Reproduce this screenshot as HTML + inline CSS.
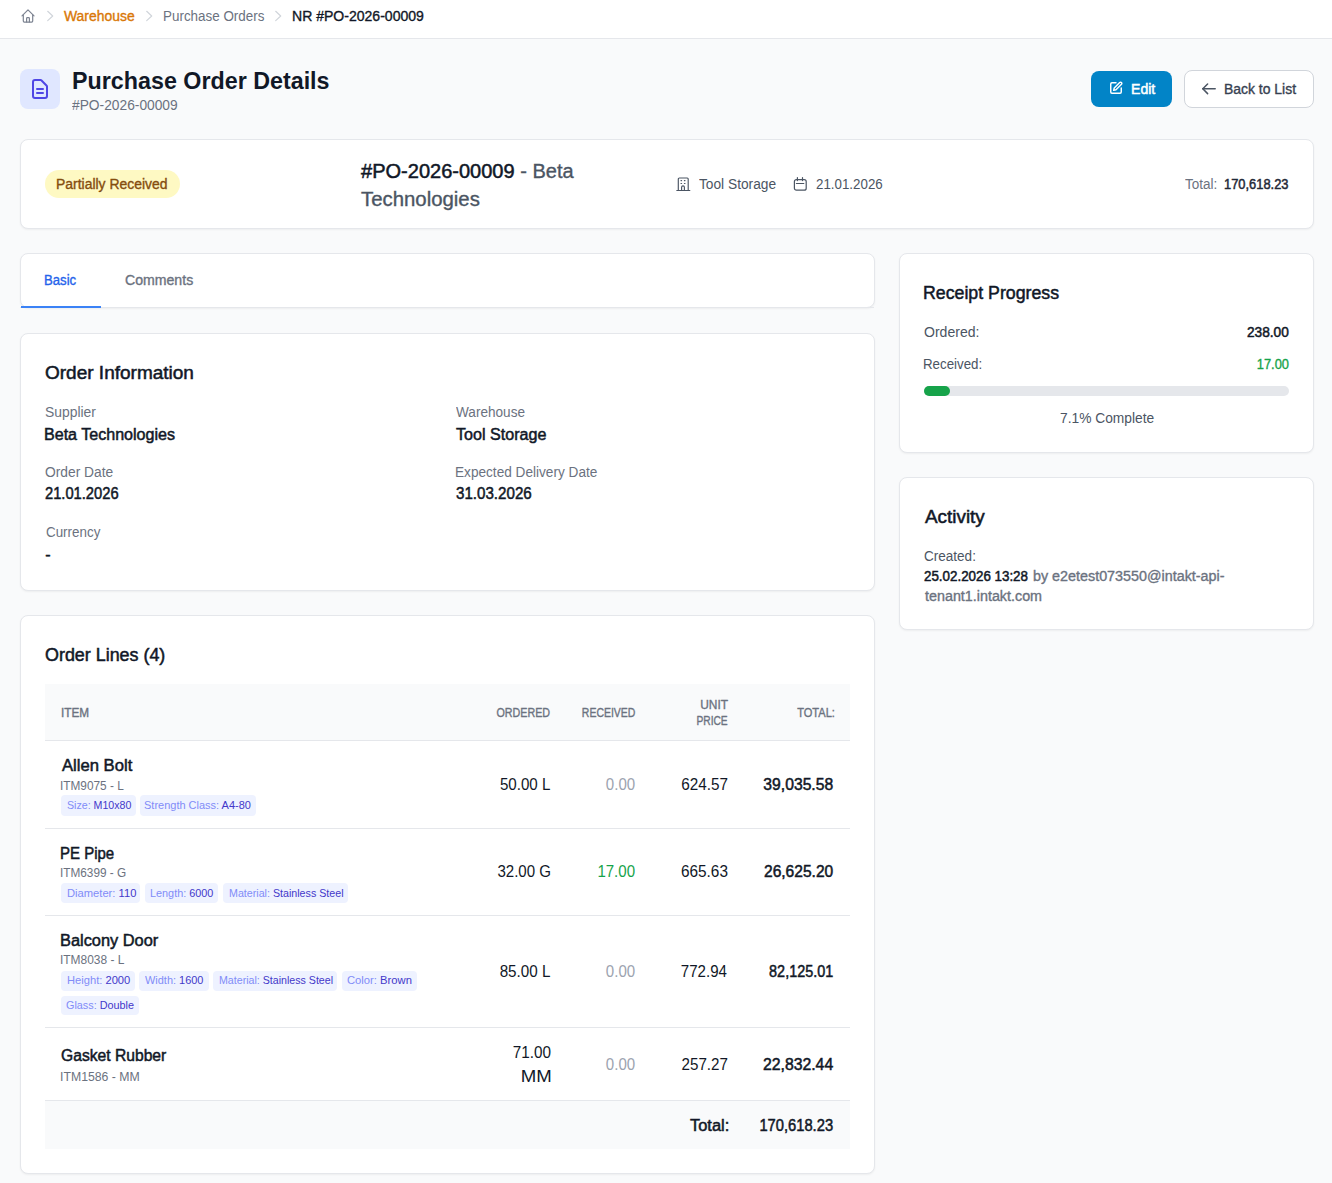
<!DOCTYPE html>
<html><head><meta charset="utf-8"><title>Purchase Order Details</title>
<style>
html,body{margin:0;padding:0;}
body{width:1332px;height:1183px;overflow:hidden;position:relative;background:#f9fafb;font-family:"Liberation Sans",sans-serif;}
.t{position:absolute;white-space:pre;}
.a{position:absolute;}
.card{position:absolute;background:#fff;border:1px solid #e5e7eb;border-radius:8px;box-sizing:border-box;box-shadow:0 1px 2px rgba(0,0,0,0.05);}
.chip{position:absolute;background:#eef2ff;border-radius:4px;}
.hl{position:absolute;height:1px;background:#e5e7eb;}
svg{display:block;}
</style></head><body>
<div class="a" style="left:0;top:0;width:1332px;height:38px;background:#fff;border-bottom:1px solid #e5e7eb;"></div>
<div class="a" style="left:20px;top:8px"><svg width="16" height="16" viewBox="0 0 16 16" fill="none" stroke="#7c8391" stroke-width="1.2" stroke-linecap="round" stroke-linejoin="round"><path d="M2 7.9 L8 1.9 L14 7.9"/><path d="M3.3 6.8 V13.1 a1 1 0 0 0 1 1 H11.7 a1 1 0 0 0 1-1 V6.8"/><path d="M6.6 14 V10.5 a0.8 0.8 0 0 1 .8-.8 h1.2 a.8.8 0 0 1 .8.8 V14"/></svg></div>
<div class="a" style="left:46px;top:10px"><svg width="8" height="12" viewBox="0 0 8 12" fill="none" stroke="#d1d5db" stroke-width="1.2" stroke-linecap="round" stroke-linejoin="round"><path d="M1.7 1.3 L6.7 6 L1.7 10.6"/></svg></div>
<div class="a" style="left:145px;top:10px"><svg width="8" height="12" viewBox="0 0 8 12" fill="none" stroke="#d1d5db" stroke-width="1.2" stroke-linecap="round" stroke-linejoin="round"><path d="M1.7 1.3 L6.7 6 L1.7 10.6"/></svg></div>
<div class="a" style="left:274px;top:10px"><svg width="8" height="12" viewBox="0 0 8 12" fill="none" stroke="#d1d5db" stroke-width="1.2" stroke-linecap="round" stroke-linejoin="round"><path d="M1.7 1.3 L6.7 6 L1.7 10.6"/></svg></div>

<div class="a" style="left:20px;top:69px;width:40px;height:40px;border-radius:8px;background:#e0e7ff"></div>
<div class="a" style="left:28px;top:77px"><svg width="24" height="24" viewBox="0 0 24 24" fill="none" stroke="#4f46e5" stroke-width="2" stroke-linecap="round" stroke-linejoin="round"><path d="M9 12h6m-6 4h6M17 21H7a2 2 0 0 1-2-2V5a2 2 0 0 1 2-2h5.586a1 1 0 0 1 .707.293l5.414 5.414a1 1 0 0 1 .293.707V19a2 2 0 0 1-2 2z"/></svg></div>

<div class="a" style="left:1091px;top:71px;width:81px;height:36px;border-radius:8px;background:#0284c7"></div>
<div class="a" style="left:1108.5px;top:81px"><svg width="14" height="14" viewBox="0 0 24 24" fill="none" stroke="#ffffff" stroke-width="2.5" stroke-linecap="round" stroke-linejoin="round"><path d="M12 3H5a2 2 0 0 0-2 2v14a2 2 0 0 0 2 2h14a2 2 0 0 0 2-2v-7"/><path d="M18.375 2.625a2.121 2.121 0 1 1 3 3L12 15l-4 1 1-4Z"/></svg></div>
<div class="a" style="left:1184px;top:70px;width:130px;height:38px;border-radius:8px;background:#fff;border:1px solid #d1d5db;box-sizing:border-box"></div>
<div class="a" style="left:1201px;top:83px"><svg width="16" height="14" viewBox="0 0 16 14" fill="none" stroke="#4b5563" stroke-width="1.5" stroke-linecap="round" stroke-linejoin="round"><path d="M1.8 5.8 H14.2"/><path d="M6.6 1 L1.8 5.8 L6.6 10.6"/></svg></div>

<div class="card" style="left:20px;top:139px;width:1294px;height:90px"></div>
<div class="a" style="left:45px;top:170px;width:135px;height:28px;border-radius:14px;background:#fef9c3"></div>
<div class="a" style="left:676px;top:177px"><svg width="16" height="16" viewBox="0 0 16 16" fill="none" stroke="#4b5563" stroke-width="1.15" stroke-linecap="round" stroke-linejoin="round"><path d="M0.8 13.5 H13.8"/><path d="M2.3 13.4 V2 a1 1 0 0 1 1-1 H11.2 a1 1 0 0 1 1 1 V13.4"/><path d="M5 3.6h.6M8.4 3.6h.6M5 6.5h.6M8.4 6.5h.6"/><path d="M5.6 13.2 V10.2 a1.4 1.4 0 0 1 2.8 0 V13.2"/></svg></div>
<div class="a" style="left:793px;top:177px"><svg width="16" height="16" viewBox="0 0 16 16" fill="none" stroke="#4b5563" stroke-width="1.2" stroke-linecap="round" stroke-linejoin="round"><rect x="1.4" y="2.6" width="11.8" height="10.6" rx="2"/><path d="M4.4 0.6 V3.6 M9.5 0.6 V3.6 M3.4 6.5 H10.8"/></svg></div>

<div class="card" style="left:20px;top:253px;width:855px;height:55px"></div>
<div class="a" style="left:20px;top:307px;width:854px;height:1px;background:#e5e7eb"></div>
<div class="a" style="left:21px;top:306px;width:80px;height:2px;background:#3b82f6"></div>

<div class="card" style="left:20px;top:333px;width:855px;height:258px"></div>
<div class="card" style="left:20px;top:615px;width:855px;height:559px"></div>
<div class="a" style="left:45px;top:684px;width:805px;height:56px;background:#f9fafb"></div>
<div class="hl" style="left:45px;top:740px;width:805px"></div>
<div class="hl" style="left:45px;top:828px;width:805px"></div>
<div class="hl" style="left:45px;top:915px;width:805px"></div>
<div class="hl" style="left:45px;top:1027px;width:805px"></div>
<div class="hl" style="left:45px;top:1100px;width:805px"></div>
<div class="a" style="left:45px;top:1101px;width:805px;height:48px;background:#f9fafb"></div>

<div class="card" style="left:899px;top:253px;width:415px;height:200px"></div>
<div class="a" style="left:924px;top:386px;width:365px;height:10px;border-radius:5px;background:#e5e7eb"></div>
<div class="a" style="left:924px;top:386px;width:26px;height:10px;border-radius:5px;background:#16a34a"></div>
<div class="card" style="left:899px;top:477px;width:415px;height:153px"></div>

<div class="chip" style="left:61px;top:795px;width:75px;height:21px"></div>
<div class="t" id="chip_795_0" style="left:66.71px;top:798.09px;font-size:11px;line-height:14px;letter-spacing:0.000px;transform:scaleX(0.9666);transform-origin:0 50%"><span style="color:#818cf8">Size: </span><span style="color:#4338ca">M10x80</span></div>
<div class="chip" style="left:140px;top:795px;width:116px;height:21px"></div>
<div class="t" id="chip_795_1" style="left:144.47px;top:798.09px;font-size:11px;line-height:14px;letter-spacing:0.000px;transform:scaleX(0.9994);transform-origin:0 50%"><span style="color:#818cf8">Strength Class: </span><span style="color:#4338ca">A4-80</span></div>
<div class="chip" style="left:61px;top:883px;width:79px;height:20px"></div>
<div class="t" id="chip_883_0" style="left:66.57px;top:885.79px;font-size:11px;line-height:14px;letter-spacing:0.000px;transform:scaleX(1.0162);transform-origin:0 50%"><span style="color:#818cf8">Diameter: </span><span style="color:#4338ca">110</span></div>
<div class="chip" style="left:145px;top:883px;width:73px;height:20px"></div>
<div class="t" id="chip_883_1" style="left:150.42px;top:885.79px;font-size:11px;line-height:14px;letter-spacing:0.000px;transform:scaleX(0.9868);transform-origin:0 50%"><span style="color:#818cf8">Length: </span><span style="color:#4338ca">6000</span></div>
<div class="chip" style="left:223px;top:883px;width:125px;height:20px"></div>
<div class="t" id="chip_883_2" style="left:228.83px;top:885.79px;font-size:11px;line-height:14px;letter-spacing:0.000px;transform:scaleX(0.9703);transform-origin:0 50%"><span style="color:#818cf8">Material: </span><span style="color:#4338ca">Stainless Steel</span></div>
<div class="chip" style="left:61px;top:971px;width:74px;height:20px"></div>
<div class="t" id="chip_970_0" style="left:66.51px;top:973.29px;font-size:11px;line-height:14px;letter-spacing:0.000px;transform:scaleX(1.0143);transform-origin:0 50%"><span style="color:#818cf8">Height: </span><span style="color:#4338ca">2000</span></div>
<div class="chip" style="left:139px;top:971px;width:70px;height:20px"></div>
<div class="t" id="chip_970_1" style="left:145.27px;top:973.29px;font-size:11px;line-height:14px;letter-spacing:0.000px;transform:scaleX(0.9946);transform-origin:0 50%"><span style="color:#818cf8">Width: </span><span style="color:#4338ca">1600</span></div>
<div class="chip" style="left:213px;top:971px;width:124px;height:20px"></div>
<div class="t" id="chip_970_2" style="left:218.84px;top:973.29px;font-size:11px;line-height:14px;letter-spacing:0.000px;transform:scaleX(0.9664);transform-origin:0 50%"><span style="color:#818cf8">Material: </span><span style="color:#4338ca">Stainless Steel</span></div>
<div class="chip" style="left:342px;top:971px;width:75px;height:20px"></div>
<div class="t" id="chip_970_3" style="left:347.38px;top:973.29px;font-size:11px;line-height:14px;letter-spacing:0.000px;transform:scaleX(1.0205);transform-origin:0 50%"><span style="color:#818cf8">Color: </span><span style="color:#4338ca">Brown</span></div>
<div class="chip" style="left:61px;top:996px;width:78px;height:19px"></div>
<div class="t" id="chip_995_0" style="left:66.11px;top:998.19px;font-size:11px;line-height:14px;letter-spacing:0.000px;transform:scaleX(0.9830);transform-origin:0 50%"><span style="color:#818cf8">Glass: </span><span style="color:#4338ca">Double</span></div>
<div class="t" id="bc1" style="top:7.15px;font-size:14px;line-height:18px;letter-spacing:0.000px;left:64.27px;transform:scaleX(0.9935);transform-origin:0 50%;"><span style="color:#d97706;-webkit-text-stroke:0.35px #d97706">Warehouse</span></div>
<div class="t" id="bc2" style="top:7.15px;font-size:14px;line-height:18px;letter-spacing:0.000px;left:162.79px;transform:scaleX(0.9582);transform-origin:0 50%;"><span style="color:#6b7280">Purchase Orders</span></div>
<div class="t" id="bc3" style="top:7.15px;font-size:14px;line-height:18px;letter-spacing:0.000px;left:291.66px;transform:scaleX(1.0026);transform-origin:0 50%;"><span style="color:#111827;-webkit-text-stroke:0.35px #111827">NR #PO-2026-00009</span></div>
<div class="t" id="h1" style="top:65.68px;font-size:24px;line-height:30px;letter-spacing:0.000px;left:71.65px;transform:scaleX(0.9702);transform-origin:0 50%;"><span style="color:#111827;font-weight:700">Purchase Order Details</span></div>
<div class="t" id="h2" style="top:95.75px;font-size:14px;line-height:18px;letter-spacing:0.000px;left:72.11px;transform:scaleX(0.9839);transform-origin:0 50%;"><span style="color:#6b7280">#PO-2026-00009</span></div>
<div class="t" id="btn1" style="top:80.15px;font-size:14px;line-height:18px;letter-spacing:0.000px;left:1130.85px;transform:scaleX(1.0056);transform-origin:0 50%;"><span style="color:#ffffff;-webkit-text-stroke:0.5px #ffffff">Edit</span></div>
<div class="t" id="btn2" style="top:80.15px;font-size:14px;line-height:18px;letter-spacing:0.000px;left:1224.40px;transform:scaleX(0.9956);transform-origin:0 50%;"><span style="color:#374151;-webkit-text-stroke:0.35px #374151">Back to List</span></div>
<div class="t" id="badge" style="top:175.35px;font-size:14px;line-height:18px;letter-spacing:0.000px;left:56.48px;transform:scaleX(0.9958);transform-origin:0 50%;"><span style="color:#854d0e;-webkit-text-stroke:0.35px #854d0e">Partially Received</span></div>
<div class="t" id="po1" style="top:159.37px;font-size:20px;line-height:25px;letter-spacing:0.000px;left:360.60px;transform:scaleX(1.0013);transform-origin:0 50%;"><span style="color:#111827;-webkit-text-stroke:0.5px #111827">#PO-2026-00009</span><span style="color:#4b5563;-webkit-text-stroke:0.35px #4b5563"> - Beta</span></div>
<div class="t" id="po2" style="top:186.97px;font-size:20px;line-height:25px;letter-spacing:0.000px;left:360.52px;transform:scaleX(1.0182);transform-origin:0 50%;"><span style="color:#4b5563;-webkit-text-stroke:0.35px #4b5563">Technologies</span></div>
<div class="t" id="loc" style="top:175.25px;font-size:14px;line-height:18px;letter-spacing:0.000px;left:699.01px;transform:scaleX(0.9801);transform-origin:0 50%;"><span style="color:#4b5563">Tool Storage</span></div>
<div class="t" id="date" style="top:175.15px;font-size:14px;line-height:18px;letter-spacing:0.000px;left:816.02px;transform:scaleX(0.9526);transform-origin:0 50%;"><span style="color:#4b5563">21.01.2026</span></div>
<div class="t" id="tot1" style="top:174.95px;font-size:14px;line-height:18px;letter-spacing:0.000px;left:1184.91px;transform:scaleX(0.9652);transform-origin:0 50%;"><span style="color:#6b7280">Total:</span></div>
<div class="t" id="tot2" style="top:174.95px;font-size:14px;line-height:18px;letter-spacing:0.000px;left:1224.11px;transform:scaleX(0.9199);transform-origin:0 50%;"><span style="color:#1f2937;-webkit-text-stroke:0.5px #1f2937">170,618.23</span></div>
<div class="t" id="tab1" style="top:271.35px;font-size:14px;line-height:18px;letter-spacing:0.000px;left:44.30px;transform:scaleX(0.9393);transform-origin:0 50%;"><span style="color:#2563eb;-webkit-text-stroke:0.35px #2563eb">Basic</span></div>
<div class="t" id="tab2" style="top:271.35px;font-size:14px;line-height:18px;letter-spacing:0.000px;left:125.30px;transform:scaleX(1.0074);transform-origin:0 50%;"><span style="color:#6b7280;-webkit-text-stroke:0.35px #6b7280">Comments</span></div>
<div class="t" id="oi" style="top:361.56px;font-size:18px;line-height:22px;letter-spacing:0.000px;left:45.16px;transform:scaleX(1.0557);transform-origin:0 50%;"><span style="color:#111827;-webkit-text-stroke:0.5px #111827">Order Information</span></div>
<div class="t" id="l1" style="top:403.05px;font-size:14px;line-height:18px;letter-spacing:0.000px;left:44.61px;transform:scaleX(0.9924);transform-origin:0 50%;"><span style="color:#6b7280">Supplier</span></div>
<div class="t" id="v1" style="top:425.36px;font-size:16px;line-height:20px;letter-spacing:0.000px;left:44.45px;transform:scaleX(1.0044);transform-origin:0 50%;"><span style="color:#111827;-webkit-text-stroke:0.5px #111827">Beta Technologies</span></div>
<div class="t" id="l2" style="top:463.15px;font-size:14px;line-height:18px;letter-spacing:0.000px;left:44.98px;transform:scaleX(0.9853);transform-origin:0 50%;"><span style="color:#6b7280">Order Date</span></div>
<div class="t" id="v2" style="top:483.66px;font-size:16px;line-height:20px;letter-spacing:0.000px;left:45.06px;transform:scaleX(0.9187);transform-origin:0 50%;"><span style="color:#111827;-webkit-text-stroke:0.5px #111827">21.01.2026</span></div>
<div class="t" id="l3" style="top:522.95px;font-size:14px;line-height:18px;letter-spacing:0.000px;left:45.53px;transform:scaleX(0.9565);transform-origin:0 50%;"><span style="color:#6b7280">Currency</span></div>
<div class="t" id="v3" style="top:545.46px;font-size:16px;line-height:20px;letter-spacing:0.000px;left:45.34px;"><span style="color:#111827;-webkit-text-stroke:0.5px #111827">-</span></div>
<div class="t" id="l4" style="top:403.05px;font-size:14px;line-height:18px;letter-spacing:0.000px;left:455.52px;transform:scaleX(0.9705);transform-origin:0 50%;"><span style="color:#6b7280">Warehouse</span></div>
<div class="t" id="v4" style="top:425.36px;font-size:16px;line-height:20px;letter-spacing:0.000px;left:455.50px;transform:scaleX(1.0061);transform-origin:0 50%;"><span style="color:#111827;-webkit-text-stroke:0.5px #111827">Tool Storage</span></div>
<div class="t" id="l5" style="top:463.15px;font-size:14px;line-height:18px;letter-spacing:0.000px;left:454.79px;transform:scaleX(0.9729);transform-origin:0 50%;"><span style="color:#6b7280">Expected Delivery Date</span></div>
<div class="t" id="v5" style="top:483.66px;font-size:16px;line-height:20px;letter-spacing:0.000px;left:455.70px;transform:scaleX(0.9457);transform-origin:0 50%;"><span style="color:#111827;-webkit-text-stroke:0.5px #111827">31.03.2026</span></div>
<div class="t" id="ol" style="top:643.66px;font-size:18px;line-height:22px;letter-spacing:0.000px;left:45.08px;transform:scaleX(0.9941);transform-origin:0 50%;"><span style="color:#111827;-webkit-text-stroke:0.5px #111827">Order Lines (4)</span></div>
<div class="t" id="th1" style="top:706.24px;font-size:12px;line-height:15px;letter-spacing:0.000px;left:60.51px;transform:scaleX(0.9810);transform-origin:0 50%;"><span style="color:#6b7280;-webkit-text-stroke:0.35px #6b7280">ITEM</span></div>
<div class="t" id="th2" style="top:706.24px;font-size:12px;line-height:15px;letter-spacing:0.000px;right:781.97px;transform:scaleX(0.8926);transform-origin:100% 50%;"><span style="color:#6b7280;-webkit-text-stroke:0.35px #6b7280">ORDERED</span></div>
<div class="t" id="th3" style="top:706.24px;font-size:12px;line-height:15px;letter-spacing:0.000px;right:696.21px;transform:scaleX(0.8723);transform-origin:100% 50%;"><span style="color:#6b7280;-webkit-text-stroke:0.35px #6b7280">RECEIVED</span></div>
<div class="t" id="th4a" style="top:698.44px;font-size:12px;line-height:15px;letter-spacing:0.000px;right:604.19px;transform:scaleX(0.9934);transform-origin:100% 50%;"><span style="color:#6b7280;-webkit-text-stroke:0.35px #6b7280">UNIT</span></div>
<div class="t" id="th4b" style="top:714.34px;font-size:12px;line-height:15px;letter-spacing:0.000px;right:604.57px;transform:scaleX(0.8517);transform-origin:100% 50%;"><span style="color:#6b7280;-webkit-text-stroke:0.35px #6b7280">PRICE</span></div>
<div class="t" id="th5" style="top:706.24px;font-size:12px;line-height:15px;letter-spacing:0.000px;right:497.60px;transform:scaleX(0.9220);transform-origin:100% 50%;"><span style="color:#6b7280;-webkit-text-stroke:0.35px #6b7280">TOTAL:</span></div>
<div class="t" id="r1n" style="top:756.46px;font-size:16px;line-height:20px;letter-spacing:0.000px;left:61.59px;transform:scaleX(1.0395);transform-origin:0 50%;"><span style="color:#111827;-webkit-text-stroke:0.5px #111827">Allen Bolt</span></div>
<div class="t" id="r1c" style="top:778.94px;font-size:12px;line-height:15px;letter-spacing:0.000px;left:60.48px;transform:scaleX(0.9851);transform-origin:0 50%;"><span style="color:#6b7280">ITM9075 - L</span></div>
<div class="t" id="r1o" style="top:775.46px;font-size:16px;line-height:20px;letter-spacing:0.000px;right:781.30px;transform:scaleX(0.9452);transform-origin:100% 50%;"><span style="color:#111827">50.00 L</span></div>
<div class="t" id="r1r" style="top:775.46px;font-size:16px;line-height:20px;letter-spacing:0.000px;right:696.94px;transform:scaleX(0.9401);transform-origin:100% 50%;"><span style="color:#9ca3af">0.00</span></div>
<div class="t" id="r1u" style="top:775.46px;font-size:16px;line-height:20px;letter-spacing:0.000px;right:604.02px;transform:scaleX(0.9551);transform-origin:100% 50%;"><span style="color:#111827">624.57</span></div>
<div class="t" id="r1t" style="top:775.46px;font-size:16px;line-height:20px;letter-spacing:0.000px;right:498.78px;transform:scaleX(0.9807);transform-origin:100% 50%;"><span style="color:#111827;-webkit-text-stroke:0.5px #111827">39,035.58</span></div>
<div class="t" id="r2n" style="top:844.06px;font-size:16px;line-height:20px;letter-spacing:0.000px;left:60.48px;transform:scaleX(0.9361);transform-origin:0 50%;"><span style="color:#111827;-webkit-text-stroke:0.5px #111827">PE Pipe</span></div>
<div class="t" id="r2c" style="top:865.74px;font-size:12px;line-height:15px;letter-spacing:0.000px;left:60.30px;transform:scaleX(0.9828);transform-origin:0 50%;"><span style="color:#6b7280">ITM6399 - G</span></div>
<div class="t" id="r2o" style="top:861.56px;font-size:16px;line-height:20px;letter-spacing:0.000px;right:781.00px;transform:scaleX(0.9400);transform-origin:100% 50%;"><span style="color:#111827">32.00 G</span></div>
<div class="t" id="r2r" style="top:861.56px;font-size:16px;line-height:20px;letter-spacing:0.000px;right:696.86px;transform:scaleX(0.9405);transform-origin:100% 50%;"><span style="color:#16a34a">17.00</span></div>
<div class="t" id="r2u" style="top:861.56px;font-size:16px;line-height:20px;letter-spacing:0.000px;right:604.38px;transform:scaleX(0.9591);transform-origin:100% 50%;"><span style="color:#111827">665.63</span></div>
<div class="t" id="r2t" style="top:861.56px;font-size:16px;line-height:20px;letter-spacing:0.000px;right:498.65px;transform:scaleX(0.9721);transform-origin:100% 50%;"><span style="color:#111827;-webkit-text-stroke:0.5px #111827">26,625.20</span></div>
<div class="t" id="r3n" style="top:931.36px;font-size:16px;line-height:20px;letter-spacing:0.000px;left:59.62px;transform:scaleX(1.0232);transform-origin:0 50%;"><span style="color:#111827;-webkit-text-stroke:0.5px #111827">Balcony Door</span></div>
<div class="t" id="r3c" style="top:952.84px;font-size:12px;line-height:15px;letter-spacing:0.000px;left:59.60px;transform:scaleX(0.9951);transform-origin:0 50%;"><span style="color:#6b7280">ITM8038 - L</span></div>
<div class="t" id="r3o" style="top:961.96px;font-size:16px;line-height:20px;letter-spacing:0.000px;right:781.30px;transform:scaleX(0.9506);transform-origin:100% 50%;"><span style="color:#111827">85.00 L</span></div>
<div class="t" id="r3r" style="top:961.96px;font-size:16px;line-height:20px;letter-spacing:0.000px;right:696.94px;transform:scaleX(0.9401);transform-origin:100% 50%;"><span style="color:#9ca3af">0.00</span></div>
<div class="t" id="r3u" style="top:961.96px;font-size:16px;line-height:20px;letter-spacing:0.000px;right:604.64px;transform:scaleX(0.9424);transform-origin:100% 50%;"><span style="color:#111827">772.94</span></div>
<div class="t" id="r3t" style="top:961.96px;font-size:16px;line-height:20px;letter-spacing:0.000px;right:498.77px;transform:scaleX(0.9002);transform-origin:100% 50%;"><span style="color:#111827;-webkit-text-stroke:0.5px #111827">82,125.01</span></div>
<div class="t" id="r4n" style="top:1045.96px;font-size:16px;line-height:20px;letter-spacing:0.000px;left:61.36px;transform:scaleX(0.9781);transform-origin:0 50%;"><span style="color:#111827;-webkit-text-stroke:0.5px #111827">Gasket Rubber</span></div>
<div class="t" id="r4c" style="top:1069.94px;font-size:12px;line-height:15px;letter-spacing:0.000px;left:60.30px;transform:scaleX(1.0227);transform-origin:0 50%;"><span style="color:#6b7280">ITM1586 - MM</span></div>
<div class="t" id="r4oa" style="top:1043.46px;font-size:16px;line-height:20px;letter-spacing:0.000px;right:781.44px;transform:scaleX(0.9545);transform-origin:100% 50%;"><span style="color:#111827">71.00</span></div>
<div class="t" id="r4ob" style="top:1066.66px;font-size:16px;line-height:20px;letter-spacing:0.000px;right:780.57px;transform:scaleX(1.1640);transform-origin:100% 50%;"><span style="color:#111827">MM</span></div>
<div class="t" id="r4r" style="top:1055.46px;font-size:16px;line-height:20px;letter-spacing:0.000px;right:696.94px;transform:scaleX(0.9401);transform-origin:100% 50%;"><span style="color:#9ca3af">0.00</span></div>
<div class="t" id="r4u" style="top:1055.46px;font-size:16px;line-height:20px;letter-spacing:0.000px;right:604.44px;transform:scaleX(0.9486);transform-origin:100% 50%;"><span style="color:#111827">257.27</span></div>
<div class="t" id="r4t" style="top:1055.46px;font-size:16px;line-height:20px;letter-spacing:0.000px;right:498.79px;transform:scaleX(0.9868);transform-origin:100% 50%;"><span style="color:#111827;-webkit-text-stroke:0.5px #111827">22,832.44</span></div>
<div class="t" id="ft1" style="top:1115.76px;font-size:16px;line-height:20px;letter-spacing:0.000px;right:603.23px;transform:scaleX(1.0276);transform-origin:100% 50%;"><span style="color:#111827;-webkit-text-stroke:0.5px #111827">Total:</span></div>
<div class="t" id="ft2" style="top:1115.76px;font-size:16px;line-height:20px;letter-spacing:0.000px;right:498.48px;transform:scaleX(0.9201);transform-origin:100% 50%;"><span style="color:#111827;-webkit-text-stroke:0.5px #111827">170,618.23</span></div>
<div class="t" id="rp" style="top:282.36px;font-size:18px;line-height:22px;letter-spacing:0.000px;left:923.08px;transform:scaleX(0.9856);transform-origin:0 50%;"><span style="color:#111827;-webkit-text-stroke:0.5px #111827">Receipt Progress</span></div>
<div class="t" id="rp1" style="top:322.65px;font-size:14px;line-height:18px;letter-spacing:0.000px;left:924.06px;transform:scaleX(1.0029);transform-origin:0 50%;"><span style="color:#4b5563">Ordered:</span></div>
<div class="t" id="rp1v" style="top:322.65px;font-size:14px;line-height:18px;letter-spacing:0.000px;right:43.47px;transform:scaleX(0.9777);transform-origin:100% 50%;"><span style="color:#111827;-webkit-text-stroke:0.5px #111827">238.00</span></div>
<div class="t" id="rp2" style="top:354.75px;font-size:14px;line-height:18px;letter-spacing:0.000px;left:923.13px;transform:scaleX(0.9514);transform-origin:0 50%;"><span style="color:#4b5563">Received:</span></div>
<div class="t" id="rp2v" style="top:354.75px;font-size:14px;line-height:18px;letter-spacing:0.000px;right:43.04px;transform:scaleX(0.9212);transform-origin:100% 50%;"><span style="color:#16a34a;-webkit-text-stroke:0.35px #16a34a">17.00</span></div>
<div class="t" id="rp3" style="top:409.15px;font-size:14px;line-height:18px;letter-spacing:0.000px;left:1059.74px;transform:scaleX(0.9841);transform-origin:0 50%;"><span style="color:#4b5563">7.1% Complete</span></div>
<div class="t" id="ac" style="top:505.76px;font-size:18px;line-height:22px;letter-spacing:0.000px;left:924.65px;transform:scaleX(1.0489);transform-origin:0 50%;"><span style="color:#111827;-webkit-text-stroke:0.5px #111827">Activity</span></div>
<div class="t" id="ac1" style="top:546.55px;font-size:14px;line-height:18px;letter-spacing:0.000px;left:923.96px;transform:scaleX(0.9663);transform-origin:0 50%;"><span style="color:#4b5563">Created:</span></div>
<div class="t" id="ac2" style="top:567.05px;font-size:14px;line-height:18px;letter-spacing:0.000px;left:924.44px;transform:scaleX(0.9538);transform-origin:0 50%;"><span style="color:#111827;-webkit-text-stroke:0.5px #111827">25.02.2026 13:28</span></div>
<div class="t" id="ac2b" style="top:567.05px;font-size:14px;line-height:18px;letter-spacing:0.000px;left:1033.06px;transform:scaleX(1.0240);transform-origin:0 50%;"><span style="color:#6b7280;-webkit-text-stroke:0.35px #6b7280">by e2etest073550@intakt-api-</span></div>
<div class="t" id="ac3" style="top:586.95px;font-size:14px;line-height:18px;letter-spacing:0.000px;left:924.63px;transform:scaleX(1.0231);transform-origin:0 50%;"><span style="color:#6b7280;-webkit-text-stroke:0.35px #6b7280">tenant1.intakt.com</span></div>
</body></html>
